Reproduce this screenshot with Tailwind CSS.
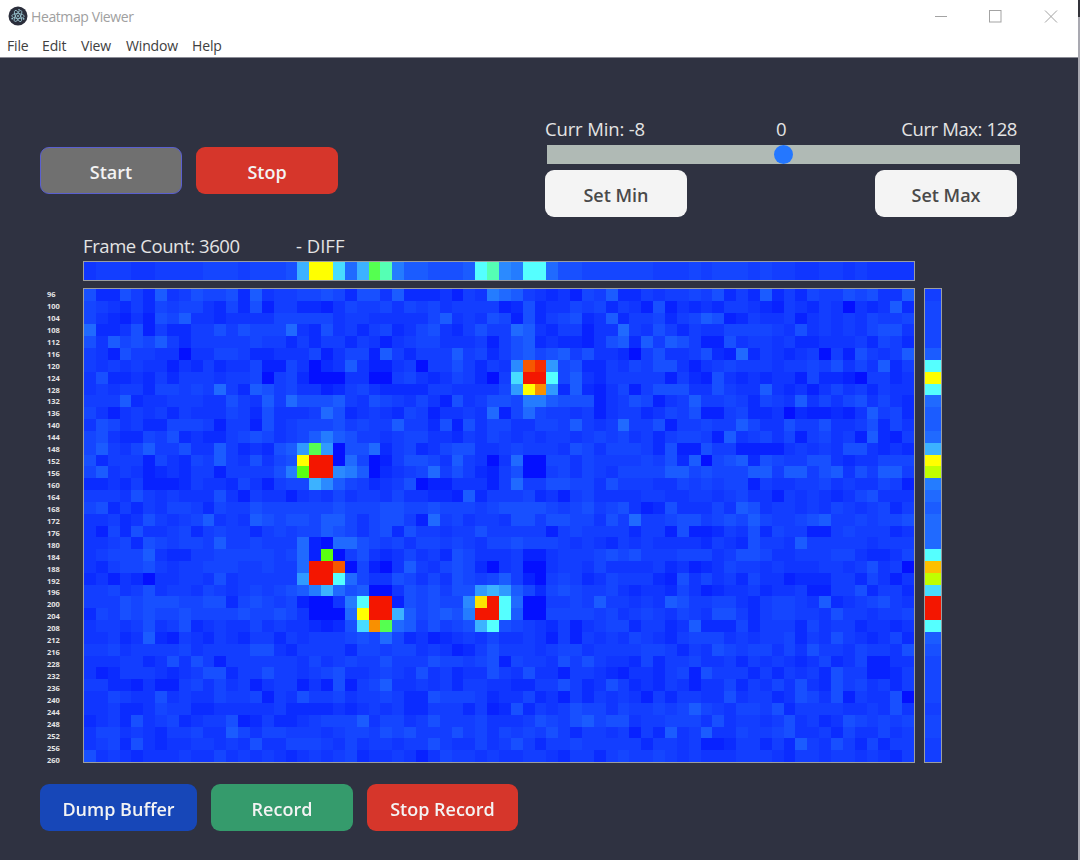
<!DOCTYPE html>
<html lang="en">
<head>
<meta charset="utf-8">
<title>Heatmap Viewer</title>
<script src="https://cdn.jsdelivr.net/npm/@tailwindcss/browser@4"></script>
</head>
<body class="w-[1080px] h-[860px] overflow-hidden bg-white font-['Open_Sans','Noto_Sans',sans-serif]">
<div class="flex h-[860px]">
<div class="w-[1078px] h-full flex flex-col shrink-0">
  <header class="h-[57px] shrink-0 bg-white flex flex-col">
    <div class="h-[33px] flex items-center pl-2">
      <svg class="w-5 h-5 shrink-0 -mt-px" viewBox="0 0 20 20" fill="none">
        <circle cx="10" cy="10" r="9.5" fill="#2b2e3b"/>
        <g stroke="#9fcbd6" stroke-width=".8">
          <ellipse cx="10" cy="10" rx="6.2" ry="2.4" transform="rotate(2 10 10)"/>
          <ellipse cx="10" cy="10" rx="6.2" ry="2.4" transform="rotate(62 10 10)"/>
          <ellipse cx="10" cy="10" rx="6.2" ry="2.4" transform="rotate(122 10 10)"/>
        </g>
        <g fill="#9fcbd6"><circle cx="10" cy="10" r=".9"/><circle cx="4.2" cy="12.6" r=".9"/><circle cx="15.6" cy="12.8" r=".9"/><circle cx="11" cy="3.8" r=".8"/></g>
      </svg>
      <span class="ml-[3px] pt-px text-[14px] tracking-[-0.4px] leading-5 text-[#a0a0a0] whitespace-nowrap">Heatmap Viewer</span>
      <svg class="ml-auto mr-[19px] w-[126px] h-4" viewBox="0 0 126 16" fill="none" stroke="#a3a3a3" stroke-width="1">
        <path d="M2 7.500h12"/><rect x="56.5" y="1.5" width="11.500" height="11.500"/><path d="M112 1.500l12 12M124 1.500l-12 12"/>
      </svg>
    </div>
    <nav class="h-6 flex items-center pl-[7px] pt-[2px] text-[14px] tracking-[-0.15px] leading-5 text-[#404040] whitespace-nowrap">
      <span class="w-[35px]">File</span><span class="w-[39px]">Edit</span><span class="w-[45px]">View</span><span class="w-[66px]">Window</span><span>Help</span>
    </nav>
  </header>
  <main class="flex-1 bg-[#2f3241] border-t border-[#8b8c96] text-[#e4e4e4] text-[18.500px] leading-6">
    <div class="h-[174px] flex pt-[59px] pl-10">
      <div class="flex gap-[14px] pt-[30px] font-semibold text-[18px] text-[#f3f3f3]">
        <button class="w-[142px] h-[47px] rounded-[9px] bg-[#707070] border border-[#5a5fd0] pt-[2px]">Start</button>
        <button class="w-[142px] h-[47px] rounded-[9px] bg-[#d6362b] pt-[2px]">Stop</button>
      </div>
      <div class="ml-[207px] w-[475px]">
        <div class="w-[472px] flex whitespace-nowrap"><span class="w-[231px] tracking-[-0.15px]">Curr Min: -8</span><span>0</span><span class="ml-auto tracking-[-0.4px]">Curr Max: 128</span></div>
        <div class="ml-[2px] mt-[4px] w-[473px] h-[19px] bg-[#b0bab5] flex items-center justify-center"><div class="w-[19px] h-[19px] rounded-full bg-[#2477ff]"></div></div>
        <div class="mt-[6px] w-[472px] flex justify-between font-semibold text-[18px] text-[#4a4a4a]">
          <button class="w-[142px] h-[47px] rounded-[9px] bg-[#f4f4f4] pt-[3px]">Set Min</button>
          <button class="w-[142px] h-[47px] rounded-[9px] bg-[#f4f4f4] pt-[3px]">Set Max</button>
        </div>
      </div>
    </div>
    <div class="h-[29px] pl-[83px] pt-[2px] flex whitespace-nowrap"><span class="w-[213px] tracking-[-0.42px]">Frame Count: 3600</span><span>- DIFF</span></div>
    <canvas id="top" width="832" height="20" class="block ml-[83px]"></canvas>
    <div class="flex mt-[7px]">
      <div id="labels" class="w-[83px] pl-[47px] pt-px h-[475px] flex flex-col font-bold text-[7.500px] leading-[11.940px]"></div>
      <canvas id="map" width="832" height="475" class="block"></canvas>
      <canvas id="side" width="18" height="475" class="block ml-[9px]"></canvas>
    </div>
    <div class="flex gap-[14px] pl-10 mt-[21px] font-semibold text-[18px] text-[#f3f3f3]">
      <button class="w-[157px] h-[47px] rounded-[9px] bg-[#1747b8] pt-[3px]">Dump Buffer</button>
      <button class="w-[142px] h-[47px] rounded-[9px] bg-[#359b6c] pt-[3px]">Record</button>
      <button class="w-[151px] h-[47px] rounded-[9px] bg-[#d6362b] pt-[3px]">Stop Record</button>
    </div>
  </main>
</div>
<div class="w-[2px] h-full flex flex-col bg-[#a9a9b1]"><div class="h-[17px] bg-[#33333a]"></div></div>
</div>
<script>
const palette = {0:'#0410ff',1:'#0822ff',2:'#0b2cff',3:'#1036ff',4:'#133eff',5:'#1546ff',6:'#1850ff',7:'#1b5cff',8:'#206aff',9:'#247cff',
 a:'#2b8aff',b:'#309aff',c:'#3cb2ff',d:'#48dcff',e:'#55ffff',f:'#55ffb4',g:'#55ff50',h:'#5aff10',i:'#c0ff00',y:'#ffff00',z:'#fce400',w:'#fcc000',o:'#f99000',p:'#f65800',q:'#f52c00',r:'#f41600'};
const rows = [
"622642734655627344556 526637222314398743231547 2243445462427242544656337",
"543242545532526144221 354453545344441262335452 4316132324432143243032372",
"532131657332333355555 344333335734365162456237 2445245761243341343435445",
"822361422446465558326 342452356324644873244133 8436424335555436343435663",
"637565742444445442424 424313455333414672322136 7274764116344342233342542",
"431644330335542233351 355174244474524675674633 2046334621824323404164347",
"434343313242335115302 373113404464243apqb56224 3546631345444344546353724",
"362232424443445045200 033004532354204drre57324 4444142163232331522104423",
"343442554548427645331 245322224433335byob27213 5146663364337323135342433",
"444723344433643748666 743654353163466599766613 4651347445425437353563532",
"531343424333542633348 623432541334381585443413 4423546114522302112137452",
"365342255541441634555 645447442616355335547434 8446144544753364463346253",
"563225462322456534579 764434553324354343443454 5342455417345351453417214",
"574357446337423267bgb 066824523566334544436535 5542611644111134343663232",
"624441532547436356yrr 085014665374303800553544 4454627056726544663233555",
"573431232441444469hrr a97023458464214600453543 5555775655577477467364774",
"22324111243325314" + "55ca 754234601133314844665536 4443354545514334453433541",
"444364343336314331343 534435332217244452314533 3344334434533143432356333",
"562424355425446555555 655566556555456666545645 6312633353763443435434524",
"334236434573437656657 753566418453443664665536 4844566456575445674454556",
"315263345245442454557 653562644344644444145444 4244161124362544114544423",
"334526545547445444810 886545355454355655543432 4343333243264437444443444",
"34555732244555554581h 046323534265333411344456 5644455534665334445532235",
"3245564344555445448rr p05103743565203400344353 3334231235443433344346340",
"231320334436344444brr e85336535365457410454235 4442163534253312224425313",
"44534634435434545679c 867003656466bcb752565445 3233253123342334114462442",
"444656665566256545100 39err165655azre800445474 4343764455324554372345643",
"254656556555565565300 08yrrc756769rre700555545 3454354366424554436443445",
"344346346234335343321 26dog8746456ce6543241345 5244237222524442534423323",
"334237214324324424344 456585231234353343141434 3543245553434452436432352",
"445344445344446632444 425545534312464443455344 4455424365455353644354436",
"333442363641444444353 454464446554561544364643 3252445334243432352351133",
"312444323466244644345 633454363423364363314432 1332451644424243426441124",
"442213114535341344131 614573343424433224464236 4232431335243536326453424",
"335433634335445143644 534454226555423352314243 4314244336344236536143360",
"334223544223333342222 323434224442412624346553 5445457543554624444334363",
"234263452344612422345 557355346444533346546756 6344555363443463423654545",
"355343244533753554443 455465644464535454642443 4142734733544563342533534",
"345263233443436335554 353443446433534642445444 4424434112442427436425244",
"634323334335343432343 452334313544343344324424 5445434333444324434434324"
].map(r => r.replace(/ /g, ''));

// Paints a bordered grid of cells, one character of each line per cell.
function paint(id, lines) {
  const canvas = document.getElementById(id), ctx = canvas.getContext('2d');
  const w = canvas.width, h = canvas.height;
  ctx.fillStyle = '#9a9da0';
  ctx.fillRect(0, 0, w, h);
  const cols = lines[0].length, n = lines.length;
  const X = i => Math.round(1 + i * (w - 2) / cols), Y = i => Math.round(1 + i * (h - 2) / n);
  lines.forEach((line, y) => [...line].forEach((c, x) => {
    ctx.fillStyle = palette[c];
    ctx.fillRect(X(x), Y(y), X(x + 1) - X(x), Y(y + 1) - Y(y));
  }));
}
paint('map', rows);
paint('top', ["344433444455545556" + "cyyd8cgf9776667efa9ee866555" + "5554445455545443344343333"]);
paint('side', [..."455557eye8778cyi987888ewidrre76555545544"]);

const labels = document.getElementById('labels');
for (let v = 96; v <= 260; v += v === 216 ? 12 : 4) {
  const d = document.createElement('div');
  d.textContent = v;
  labels.append(d);
}
</script>
</body>
</html>
